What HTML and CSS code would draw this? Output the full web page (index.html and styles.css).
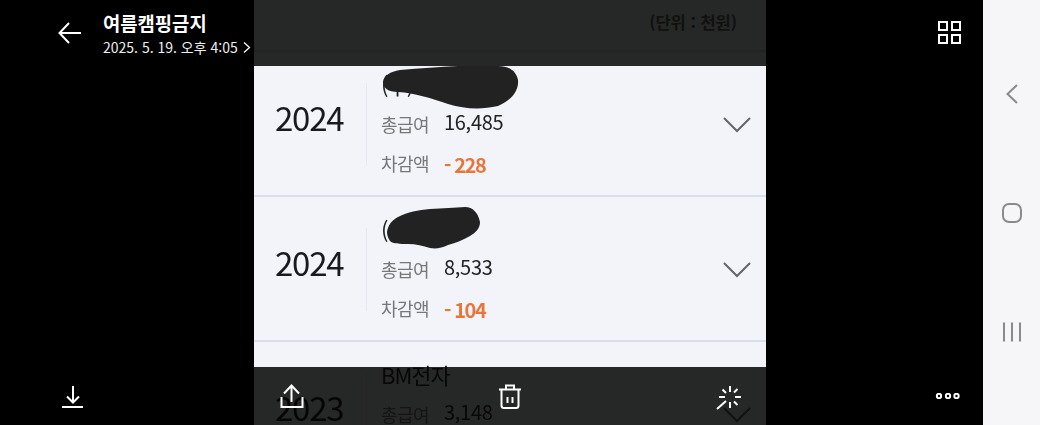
FILE: index.html
```html
<!DOCTYPE html>
<html lang="ko">
<head>
  <meta charset="UTF-8" />
  <meta name="viewport" content="width=device-width, initial-scale=1.0" />
  <title>여름캠핑금지</title>
  <link rel="stylesheet" href="styles.css">
</head>
<body>
  <div class="viewer">

    <div class="side left">
      <div class="header">
        <svg class="icon back" width="24" height="22" viewBox="0 0 24 22"><path d="M23 11H1.500M11 1 1.500 11 11 21"/></svg>
        <div class="meta">
          <div class="title">여름캠핑금지</div>
          <div class="date">2025. 5. 19. 오후 4:05
            <svg class="icon date-arrow" width="8" height="11" viewBox="0 0 8 11"><path d="M1 .5 6.500 5.500 1 10.500"/></svg>
          </div>
        </div>
      </div>
      <svg class="icon download" width="22" height="23" viewBox="0 0 22 23"><path d="M11 1V17M5 11.500 11 17.500 17 11.500M0 22H21"/></svg>
    </div>

    <div class="photo">
      <div class="unit">(단위 : 천원)</div>

      <div class="row">
        <div class="year">2024</div>
        <div class="divider"></div>
        <div class="info">
          <div class="name">(주)</div>
          <div class="line"><span class="label">총급여</span><span class="value">16,485</span></div>
          <div class="line"><span class="label">차감액</span><span class="minus">- 228</span></div>
        </div>
        <svg class="chevron" width="28" height="16" viewBox="0 0 28 16"><path d="M1 1 14 14 27 1"/></svg>
        <svg class="scribble first" width="145" height="55" viewBox="0 0 145 55"><path d="M3 22C4 15 10 12 20 10 40 8 60 7 78 6L118 6C128 6 136 10 138 20 139 30 132 40 118 46 100 50 85 49 68 44 50 38 35 33 18 32 8 32 3 28 3 22Z"/></svg>
      </div>

      <div class="row">
        <div class="year">2024</div>
        <div class="divider"></div>
        <div class="info">
          <div class="name">(</div>
          <div class="line"><span class="label">총급여</span><span class="value">8,533</span></div>
          <div class="line"><span class="label">차감액</span><span class="minus">- 104</span></div>
        </div>
        <svg class="chevron" width="28" height="16" viewBox="0 0 28 16"><path d="M1 1 14 14 27 1"/></svg>
        <svg class="scribble second" width="105" height="55" viewBox="0 0 105 55"><path d="M7 32C8 25 12 20 18 17 28 12 38 10 50 9 63 8 75 8 85 7 93 7 98 13 100 22 100 29 95 33 90 36 83 40 76 43 68 45 62 48 56 49 50 48 43 46 36 44 28 44 20 44 13 44 10 41 8 38 7 35 7 32Z"/></svg>
      </div>

      <div class="row">
        <div class="year">2023</div>
        <div class="divider"></div>
        <div class="info">
          <div class="name">BM전자</div>
          <div class="line"><span class="label">총급여</span><span class="value">3,148</span></div>
        </div>
        <svg class="chevron" width="28" height="16" viewBox="0 0 28 16"><path d="M1 1 14 14 27 1"/></svg>
      </div>

      <div class="shade top"></div>
      <div class="shade bottom">
        <svg class="icon" width="24" height="24" viewBox="0 0 24 24"><path d="M11.500 2V18M4 9.500 11.500 1.500 19 9.500M1.500 13V23H22.500V13"/></svg>
        <svg class="icon" width="24" height="25" viewBox="0 0 24 25"><path d="M1 5.500H23M8 5.500V1.500H16V5.500M3.500 5.500V21.500Q3.500 24 6 24H18Q20.500 24 20.500 21.500V5.500M9.500 13V19M14.500 13V19"/></svg>
        <svg class="icon sparkle" width="26" height="26" viewBox="0 0 26 26"><path d="M14 2V8M14 18V24M3 13H9M19 13H25M6.500 5.500 10 9M21.500 5 18 8.500M18 17.500 21.500 21M1 25 10 17"/></svg>
      </div>
    </div>

    <div class="side right">
      <svg class="icon grid" width="23" height="23" viewBox="0 0 23 23"><path d="M1 1H9V9H1ZM14 1H22V9H14ZM1 14H9V22H1ZM14 14H22V22H14Z"/></svg>
      <svg class="icon more" width="26" height="6" viewBox="0 0 26 6"><circle cx="4" cy="3" r="2.200"/><circle cx="13" cy="3" r="2.200"/><circle cx="21.500" cy="3" r="2.200"/></svg>
    </div>

    <div class="nav">
      <svg class="nav-icon" width="12" height="20" viewBox="0 0 12 20"><path d="M11 1 1.500 10 11 19"/></svg>
      <svg class="nav-icon" width="20" height="20" viewBox="0 0 20 20"><rect x="1" y="1" width="18" height="18" rx="6"/></svg>
      <svg class="nav-icon" width="18" height="20" viewBox="0 0 18 20"><path d="M1 .5V19.500M9 .5V19.500M17 .5V19.500"/></svg>
    </div>

  </div>
</body>
</html>
```

FILE: styles.css
```css
html, body {
  margin: 0;
  padding: 0;
}
body {
  font-family: "Noto Sans CJK KR", "Noto Sans", sans-serif;
  background: #000;
}
.viewer {
  display: flex;
  width: 1040px;
  height: 425px;
  overflow: hidden;
  background: #000;
}
.icon {
  display: block;
  fill: none;
  stroke: #fff;
  stroke-width: 2;
}

/* black columns either side of the photo */
.side {
  display: flex;
  flex-direction: column;
  justify-content: space-between;
  flex: none;
}
.left {
  width: 254px;
  padding: 8px 0 17px 58px;
  box-sizing: border-box;
}
.header {
  display: flex;
  gap: 21px;
}
.back { margin-top: 14px; }
.title {
  color: #fff;
  font-size: 18.800px;
  font-weight: 700;
  line-height: 30px;
}
.date {
  display: flex;
  align-items: center;
  gap: 5px;
  color: #eee;
  font-size: 14px;
  line-height: 18px;
  white-space: nowrap;
}
.date-arrow { stroke-width: 1.300; }
.download { margin-left: 4px; }
.right {
  width: 217px;
  align-items: flex-end;
  padding: 21px 22px 26px 0;
  box-sizing: border-box;
}

/* the photo itself */
.photo {
  position: relative;
  flex: none;
  width: 512px;
  height: 425px;
  overflow: hidden;
  background: #f2f4fa;
}
.unit {
  height: 50px;
  padding-right: 29px;
  border-bottom: 2px solid #d9deea;
  text-align: right;
  color: #666;
  font-size: 16.500px;
  font-weight: 700;
  line-height: 44px;
}
.row {
  position: relative;
  display: flex;
  height: 143px;
  border-bottom: 2px solid #d9deea;
}
.year {
  flex: none;
  width: 91px;
  padding-left: 21px;
  color: #1a1a1e;
  font-size: 33px;
  letter-spacing: -1.200px;
  line-height: 131px;
  filter: blur(.3px);
}
.divider {
  flex: none;
  width: 1px;
  height: 83px;
  margin-top: 31px;
  background: #e6e8ef;
}
.info {
  flex: 1;
  padding: 20px 0 0 14px;
  filter: blur(.3px);
}
.name {
  height: 24px;
  margin-bottom: 8px;
  color: #222;
  font-size: 22px;
  letter-spacing: -1px;
  line-height: 24px;
  white-space: nowrap;
}
.line {
  display: flex;
  align-items: center;
  height: 39px;
}
.label {
  flex: none;
  width: 63px;
  color: #777;
  font-size: 18px;
  letter-spacing: -.5px;
}
.value {
  margin-top: -5px;
  color: #222;
  font-size: 20px;
  letter-spacing: -.3px;
}
.minus {
  margin-top: 4px;
  color: #e8763a;
  font-size: 20px;
  font-weight: 700;
  letter-spacing: -1.400px;
}
.chevron {
  flex: none;
  margin: 65px 15px 0 0;
  fill: none;
  stroke: #666;
  stroke-width: 2;
}
.scribble {
  position: absolute;
  left: 126px;
  fill: #222;
}
.scribble.first { top: 8px; }
.scribble.second { top: 3px; }

/* viewer bars dim whatever sits under them */
.shade {
  position: absolute;
  left: 0;
  right: 0;
  background: rgba(2, 2, 1, .85);
}
.shade.top {
  top: 0;
  height: 66px;
}
.shade.bottom {
  bottom: 0;
  height: 58px;
  display: flex;
  justify-content: space-between;
  padding: 17px 25px 0 26px;
  box-sizing: border-box;
}
.sparkle { margin-right: -1px; }

/* android nav bar */
.nav {
  display: flex;
  flex-direction: column;
  align-items: center;
  justify-content: space-between;
  flex: none;
  width: 57px;
  padding: 84px 0 83px;
  box-sizing: border-box;
  background: #f6f6f8;
}
.nav-icon {
  display: block;
  fill: none;
  stroke: #8a8a8e;
  stroke-width: 2;
}
```
